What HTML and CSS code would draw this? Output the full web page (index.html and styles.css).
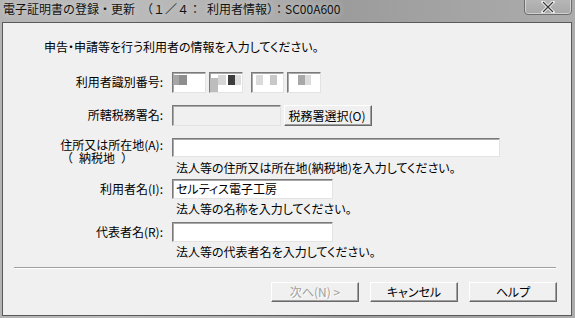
FILE: index.html
```html
<!DOCTYPE html>
<html lang="ja">
<head>
<meta charset="utf-8">
<link rel="stylesheet" href="styles.css">
</head>
<body>
<div class="window">
  <div class="titlebar">
    <span class="title">電子証明書の登録・更新　（１／４：&#8194;利用者情報）：SC00A600</span>
    <div class="close">
      <svg width="16" height="12" viewBox="0 0 16 12"><path d="M3 1 L13 11 M13 1 L3 11" stroke="#fff" stroke-width="3" stroke-linecap="square"/><path d="M3 1 L13 11 M13 1 L3 11" stroke="#3a3a3a" stroke-width="1.4"/></svg>
    </div>
  </div>
  <div class="client">
    <p class="prompt">申告・申請等を行う利用者の情報を入力してください。</p>
    <div class="form">
      <div class="row r-id">
        <div class="label">利用者識別番号:</div>
        <div class="ids">
          <div class="field id-box"><i class="px" style="left:0;width:6px;background:#a6a6a6"></i><i class="px" style="left:6px;width:8px;background:#8e8e8e"></i></div>
          <div class="field id-box"><i class="px" style="left:0;top:5px;height:14px;width:8px;background:#bdbdbd"></i><i class="px" style="left:8px;width:8px;background:#d6d6d6"></i><i class="px" style="left:18px;width:7px;background:#3d3d3d"></i><i class="px" style="left:25px;width:6px;background:#dedede"></i></div>
          <div class="field id-box id-third"><i class="px" style="left:4px;width:7px;background:#dadada"></i><i class="px" style="left:18px;width:7px;background:#c8c8c8"></i></div>
          <div class="field id-box"><i class="px" style="left:10px;width:7px;background:#a8a8a8"></i><i class="px" style="left:17px;width:6px;background:#dcdcdc"></i></div>
        </div>
      </div>
      <div class="row r-office">
        <div class="label">所轄税務署名:</div>
        <div class="ctrl">
          <div class="field disabled office"></div>
          <div class="btn office-btn">税務署選択(O)</div>
        </div>
      </div>
      <div class="row r-addr">
        <div class="label two">
          <div class="main-line">住所又は所在地(A):</div>
          <div class="sub">（&ensp;納税地&ensp;）</div>
        </div>
        <div class="stack">
          <div class="field addr"></div>
          <div class="hint">法人等の住所又は所在地(納税地)を入力してください。</div>
        </div>
      </div>
      <div class="row r-name">
        <div class="label">利用者名(I):</div>
        <div class="stack">
          <div class="field name">セルティス電子工房</div>
          <div class="hint">法人等の名称を入力してください。</div>
        </div>
      </div>
      <div class="row r-rep">
        <div class="label">代表者名(R):</div>
        <div class="stack">
          <div class="field name"></div>
          <div class="hint">法人等の代表者名を入力してください。</div>
        </div>
      </div>
    </div>
    <div class="sep"></div>
    <div class="buttons">
      <div class="btn big disabled-btn">次へ(N) &gt;</div>
      <div class="btn big">キャンセル</div>
      <div class="btn big">ヘルプ</div>
    </div>
  </div>
</div>
</body>
</html>
```
FILE: styles.css
```css
* { box-sizing: border-box; }
html, body { margin: 0; padding: 0; }
body {
  width: 575px;
  height: 318px;
  overflow: hidden;
  background: #a6a6a6;
  font-family: "Noto Sans CJK JP", "Noto Sans", sans-serif;
  font-feature-settings: "palt";
  color: #000;
}
.window {
  width: 575px;
  height: 318px;
  display: flex;
  flex-direction: column;
  background: linear-gradient(90deg, #b4b4b4 0%, #bcbcbc 20%, #b0b0b0 45%, #9c9c9c 60%, #a4a4a4 80%, #acacac 100%);
}
.titlebar {
  height: 22px;
  flex: none;
  display: flex;
  align-items: flex-start;
  justify-content: space-between;
  padding-left: 3px;
  padding-right: 3px;
}
.title {
  font-size: 12px;
  line-height: 14px;
  margin-top: 2px;
  font-feature-settings: normal;
  color: #111;
  text-shadow: 0 0 6px rgba(255,255,255,0.5);
}
.close {
  width: 48px;
  height: 18px;
  margin-top: -3px;
  border: 1px solid #6d6d6d;
  border-radius: 0 0 4px 4px;
  box-shadow: inset 0 0 0 1px rgba(255,255,255,0.45);
  background: linear-gradient(#b8b8b8, #a8a8a8);
  display: flex;
  align-items: center;
  justify-content: center;
  padding-top: 2px;
}
.client {
  flex: 1;
  margin: 0 3px 2px 2px;
  border: 1px solid #5a5a5a;
  background: #f0f0f0;
  font-size: 12px;
  line-height: 14px;
  display: flex;
  flex-direction: column;
}
.prompt {
  margin: 17px 0 0 41px;
  font-size: 12px;
  line-height: 14px;
}
.form {
  display: flex;
  flex-direction: column;
}
.row {
  display: grid;
  grid-template-columns: 160px 1fr;
  column-gap: 9px;
  align-items: start;
}
.label {
  text-align: right;
  white-space: nowrap;
}
.label.two { line-height: 13px; }
.sub {
  text-align: left;
  padding-left: 58px;
  font-feature-settings: normal;
  line-height: 12px;
  margin-top: 1px;
  white-space: pre;
}
.r-id { margin-top: 18px; }
.r-id .label { padding-top: 3px; }
.r-office { margin-top: 12px; }
.r-office .label { padding-top: 3px; }
.r-addr { margin-top: 12px; }
.r-name { margin-top: 5px; }
.r-name .label { padding-top: 3px; }
.r-rep { margin-top: 7px; }
.r-rep .label { padding-top: 3px; }
.ids { display: flex; gap: 3px; }
.field {
  position: relative;
  height: 20px;
  background: #fff;
  border-style: solid;
  border-width: 1px;
  border-color: #7a7a7a #e3e3e3 #e3e3e3 #7a7a7a;
  box-shadow: inset 1px 1px 0 #a8a8a8;
  padding: 1px 0 0 3px;
  line-height: 16px;
  font-size: 12px;
  overflow: hidden;
}
.id-box { width: 34px; height: 21px; }
.id-third { width: 33px; margin-left: 5px; }
.px { position: absolute; top: 2px; height: 10px; }
.ctrl { display: flex; gap: 3px; }
.field.disabled { background: #f0f0f0; }
.office { width: 109px; height: 21px; }
.btn {
  height: 21px;
  background: #f0f0f0;
  border-style: solid;
  border-width: 1px;
  border-color: #ffffff #696969 #696969 #ffffff;
  box-shadow: inset -1px -1px 0 #a0a0a0;
  display: flex;
  align-items: center;
  justify-content: center;
  font-size: 12px;
  white-space: nowrap;
}
.office-btn { width: 88px; padding-right: 2px; }
.stack { display: flex; flex-direction: column; }
.addr { width: 328px; height: 19px; }
.name { width: 161px; height: 20px; }
.hint { margin-top: 4px; padding-left: 4px; line-height: 12px; }
.r-addr .hint { margin-top: 5px; }
.sep {
  margin: 9px 15px 0 11px;
  height: 2px;
  border-top: 1px solid #a0a0a0;
  border-bottom: 1px solid #ffffff;
}
.buttons {
  display: flex;
  justify-content: flex-end;
  gap: 11px;
  margin: 13px 14px 0 0;
}
.btn.big { width: 88px; height: 20px; }
.disabled-btn { color: #a0a0a0; text-shadow: 1px 1px 0 #fff; }
```
